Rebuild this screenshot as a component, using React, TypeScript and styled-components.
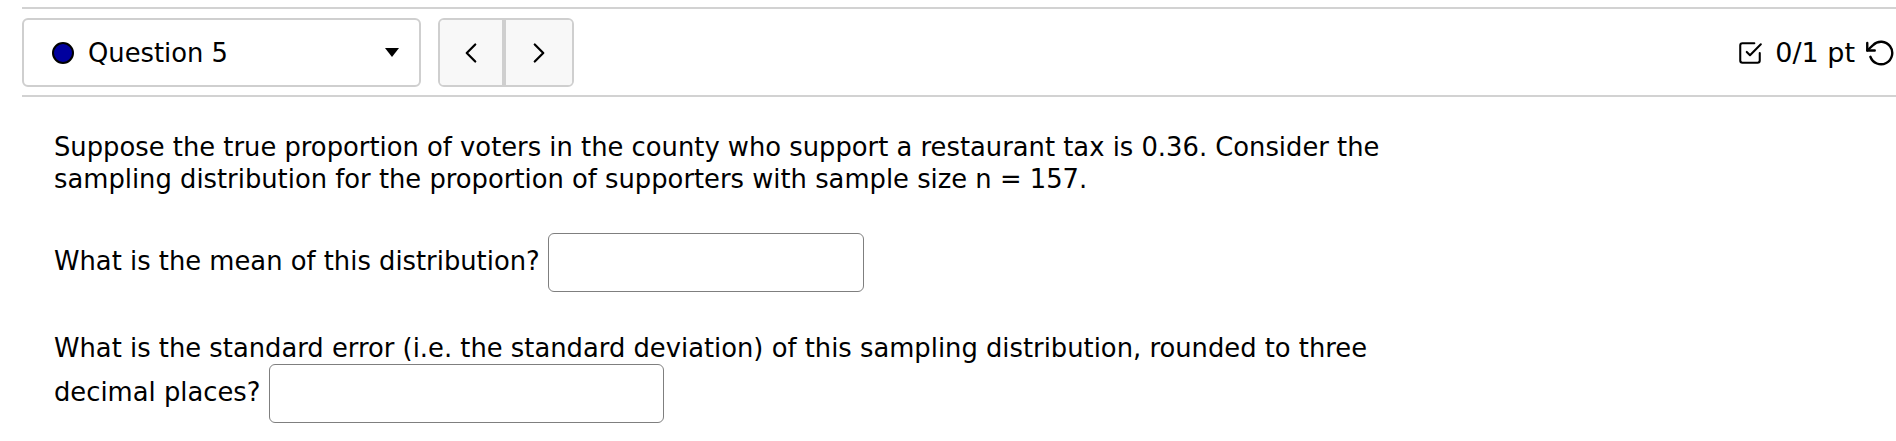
import React from 'react';
import styled, { createGlobalStyle } from 'styled-components';

const GlobalStyle = createGlobalStyle`
  html, body {
    margin: 0;
    padding: 0;
    background: #fff;
    overflow: hidden;
  }
  body {
    font-family: "DejaVu Sans", Verdana, sans-serif;
    color: #000;
  }
`;

const Page = styled.div`
  padding: 7px 0 0 22px;
`;

const Header = styled.header`
  display: flex;
  align-items: center;
  gap: 17px;
  padding: 9px 0 8px;
  border-top: 2px solid #d2d2d2;
  border-bottom: 2px solid #d2d2d2;
`;

const QuestionSelect = styled.button`
  display: flex;
  align-items: center;
  box-sizing: border-box;
  width: 399px;
  height: 69px;
  padding: 0 20px 0 28px;
  border: 2px solid #cfcfcf;
  border-radius: 6px;
  background: #fff;
  font-family: inherit;
  color: #000;
  cursor: pointer;
`;

const StatusDot = styled.span`
  box-sizing: border-box;
  width: 22px;
  height: 22px;
  border: 2px solid #000;
  border-radius: 50%;
  background: #00009e;
  margin-right: 14px;
  flex: 0 0 auto;
`;

const SelectLabel = styled.span`
  flex: 1;
  text-align: left;
  font-size: 25.8px;
`;

const Caret = styled.span`
  width: 0;
  height: 0;
  border-left: 7px solid transparent;
  border-right: 7px solid transparent;
  border-top: 9px solid #000;
`;

const NavGroup = styled.div`
  display: flex;
  box-sizing: border-box;
  height: 69px;
  border: 2px solid #cfcfcf;
  border-radius: 6px;
  overflow: hidden;
`;

const NavButton = styled.button`
  display: flex;
  align-items: center;
  justify-content: center;
  width: 66px;
  padding: 0;
  border: none;
  background: #f8f8f8;
  cursor: pointer;

  &:first-child {
    border-right: 4px solid #cfcfcf;
  }
`;

const Score = styled.div`
  display: flex;
  align-items: center;
  margin-left: auto;
`;

const ScoreText = styled.span`
  margin: 0 11px 0 12px;
  font-size: 27px;
  white-space: nowrap;
`;

const Content = styled.div`
  padding-left: 32px;
`;

const Para = styled.p<{ $gap: number }>`
  margin: ${({ $gap }) => $gap}px 0 0;
  font-size: 25.8px;
  line-height: 32px;
`;

const AnswerBox = styled.input<{ $width: number }>`
  box-sizing: border-box;
  width: ${({ $width }) => $width}px;
  height: 59px;
  vertical-align: middle;
  border: 1px solid #7f7f7f;
  border-radius: 6px;
  background: #fff;
  font-family: inherit;
  font-size: 24px;
  padding: 0 10px;
`;

const Chevron = ({ dir }: { dir: 'left' | 'right' }) => (
  <svg width="34" height="34" viewBox="0 0 24 24" fill="none" stroke="#000" strokeWidth="1.6" strokeLinecap="round" strokeLinejoin="round">
    <polyline points={dir === 'left' ? '15 18 9 12 15 6' : '9 18 15 12 9 6'} />
  </svg>
);

const CheckSquare = () => (
  <svg width="26" height="26" viewBox="0 0 24 24" fill="none" stroke="#000" strokeWidth="1.9" strokeLinecap="round" strokeLinejoin="round">
    <polyline points="9 11 12 14 22 4" />
    <path d="M21 12v7a2 2 0 0 1-2 2H5a2 2 0 0 1-2-2V5a2 2 0 0 1 2-2h11" />
  </svg>
);

const RetryIcon = () => (
  <svg width="30" height="30" viewBox="0 0 24 24" fill="none" stroke="#000" strokeWidth="1.9" strokeLinecap="round" strokeLinejoin="round">
    <polyline points="1 4 1 10 7 10" />
    <path d="M3.51 15a9 9 0 1 0 2.13-9.36L1 10" />
  </svg>
);

export default function App() {
  return (
    <Page>
      <GlobalStyle />
      <Header>
        <QuestionSelect>
          <StatusDot />
          <SelectLabel>Question 5</SelectLabel>
          <Caret />
        </QuestionSelect>
        <NavGroup>
          <NavButton aria-label="Previous question">
            <Chevron dir="left" />
          </NavButton>
          <NavButton aria-label="Next question">
            <Chevron dir="right" />
          </NavButton>
        </NavGroup>
        <Score>
          <CheckSquare />
          <ScoreText>0/1 pt</ScoreText>
          <RetryIcon />
        </Score>
      </Header>
      <Content>
        <Para $gap={34}>
          Suppose the true proportion of voters in the county who support a restaurant tax is 0.36. Consider the
          <br />
          sampling distribution for the proportion of supporters with sample size n = 157.
        </Para>
        <Para $gap={38}>
          What is the mean of this distribution? <AnswerBox $width={316} />
        </Para>
        <Para $gap={40}>
          What is the standard error (i.e. the standard deviation) of this sampling distribution, rounded to three
          <br />
          decimal places? <AnswerBox $width={395} />
        </Para>
      </Content>
    </Page>
  );
}
